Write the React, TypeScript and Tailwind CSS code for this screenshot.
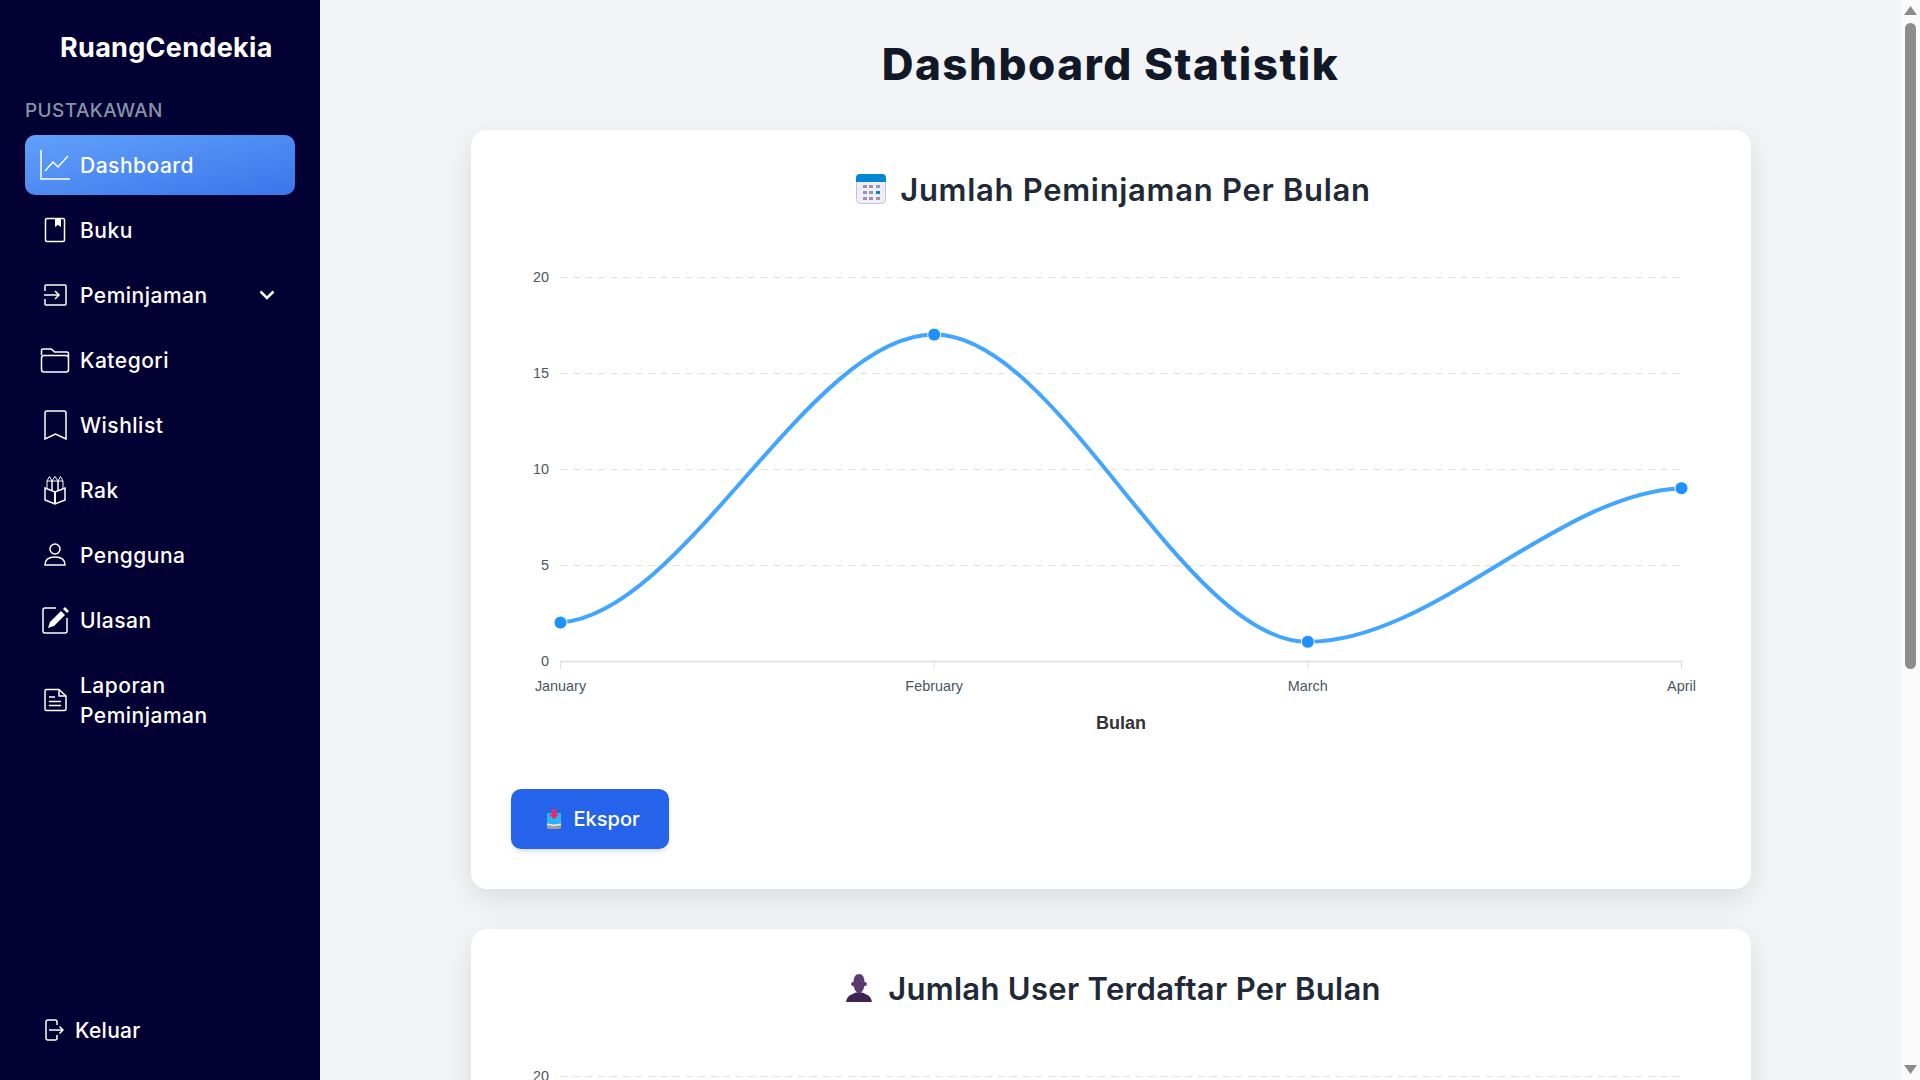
import React from 'react';

const sans = 'font-["Inter","Liberation_Sans",sans-serif]';

type Point = { x: number; y: number };

const PLOT = { left: 49.5, right: 1170.5, top: 39, bottom: 423 };
const MONTHS = ['January', 'February', 'March', 'April'];

// flat tangents on every point, a touch of slope on the two ends
const buildCurve = (pts: Point[]) => {
  const slope = (i: number) => {
    if (i === 0) return (0.1 * (pts[1].y - pts[0].y)) / (pts[1].x - pts[0].x);
    if (i === pts.length - 1) {
      const a = pts[i - 1];
      const b = pts[i];
      return (0.1 * (b.y - a.y)) / (b.x - a.x);
    }
    return 0;
  };
  let d = `M${pts[0].x} ${pts[0].y}`;
  for (let i = 1; i < pts.length; i++) {
    const a = pts[i - 1];
    const b = pts[i];
    const dx = (b.x - a.x) / 3;
    d += ` C${a.x + dx} ${a.y + slope(i - 1) * dx} ${b.x - dx} ${b.y - slope(i) * dx} ${b.x} ${b.y}`;
  }
  return d;
};

const LineChart = ({ data }: { data: number[] }) => {
  const h = PLOT.bottom - PLOT.top;
  const w = PLOT.right - PLOT.left;
  const pts = data.map((v, i) => ({
    x: PLOT.left + (w * i) / (data.length - 1),
    y: PLOT.bottom - (h * v) / 20,
  }));
  return (
    <svg width={1200} height={511} className="block" fontFamily="'Liberation Sans', Arial, sans-serif">
      {[20, 15, 10, 5].map((v) => {
        const y = PLOT.bottom - (h * v) / 20 + 0.5;
        return (
          <g key={v}>
            <line x1={PLOT.left} x2={PLOT.right} y1={y} y2={y} stroke="#e0e0e0" strokeWidth={1} strokeDasharray="7 5.5" />
            <text x={38} y={y + 4} textAnchor="end" fontSize={14.4} fill="#4b5563">{v}</text>
          </g>
        );
      })}
      <line x1={PLOT.left} x2={PLOT.right} y1={PLOT.bottom + 0.5} y2={PLOT.bottom + 0.5} stroke="#e4e4e4" strokeWidth={2} />
      <text x={38} y={PLOT.bottom + 4.5} textAnchor="end" fontSize={14.4} fill="#4b5563">0</text>
      {MONTHS.map((m, i) => {
        const x = PLOT.left + (w * i) / 3;
        return (
          <g key={m}>
            <line x1={x} x2={x} y1={PLOT.bottom} y2={PLOT.bottom + 8} stroke="#e0e0e0" strokeWidth={1} />
            <text x={x} y={PLOT.bottom + 30} textAnchor="middle" fontSize={14.4} fill="#4b5563">{m}</text>
          </g>
        );
      })}
      <text x={610} y={PLOT.bottom + 68} textAnchor="middle" fontSize={18} fontWeight={700} fill="#333333">Bulan</text>
      <path d={buildCurve(pts)} fill="none" stroke="#42a5ff" strokeWidth={4} />
      {pts.map((p, i) => (
        <circle key={i} cx={p.x} cy={p.y} r={6.5} fill="#1e90ff" stroke="#ffffff" strokeWidth={1} />
      ))}
    </svg>
  );
};

const Icon = ({ children, size = 30 }: { children: React.ReactNode; size?: number }) => (
  <svg width={size} height={size} viewBox={`0 0 ${size} ${size}`} fill="none" stroke="currentColor" strokeWidth={1.5} className="shrink-0">
    {children}
  </svg>
);

const icons: Record<string, React.ReactNode> = {
  dashboard: (
    <Icon>
      <path d="M1 0V29H30" />
      <path d="M5 21L13 12L18 17L28 6" />
    </Icon>
  ),
  buku: (
    <Icon>
      <rect x="5.5" y="3.5" width="19" height="23" rx="1.5" />
      <path d="M15 4H21V12L18 10L15 12Z" fill="currentColor" stroke="none" />
    </Icon>
  ),
  peminjaman: (
    <Icon>
      <path d="M5 11V6Q5 5 6 5H25Q26 5 26 6V24Q26 25 25 25H6Q5 25 5 24V19" />
      <path d="M4 15H19M15 11L19 15L15 19" />
    </Icon>
  ),
  kategori: (
    <Icon>
      <path d="M1.500 10V5.500Q1.500 4 3 4H10.500Q11.500 4 12.500 5L14.500 7H27Q28.500 7 28.500 9V12" />
      <rect x="1.500" y="10.500" width="27" height="16.500" rx="2.500" />
    </Icon>
  ),
  wishlist: (
    <Icon>
      <path d="M5 29V3Q5 1 7 1H24Q26 1 26 3V29L15.500 24Z" />
    </Icon>
  ),
  rak: (
    <Icon>
      <path d="M5 13L15 17L25 13V25L15 29L5 25Z" />
      <path d="M15 17V29" strokeWidth={2} />
      <path d="M7 14V6L9.500 1.500L12 6V15M12 15V6L15 1.500L18 6V15M18 15V6L20.500 1.500L23 6V14M7 6H23" strokeWidth={1} />
    </Icon>
  ),
  pengguna: (
    <Icon>
      <circle cx="15" cy="9" r="5" />
      <path d="M5 25Q5 17 15 17Q25 17 25 25Z" />
    </Icon>
  ),
  ulasan: (
    <Icon>
      <path d="M16 3H5Q3 3 3 5V26Q3 28 5 28H25Q27 28 27 26V13" />
      <path d="M8 23L10 17L21 6L25 10L14 21Z" fill="currentColor" stroke="none" />
      <path d="M23 4L25 2L29 6L27 8Z" fill="currentColor" stroke="none" />
    </Icon>
  ),
  laporan: (
    <Icon>
      <path d="M5 6Q5 4.500 6.500 4.500H19L26 11V24Q26 25.500 24.500 25.500H6.500Q5 25.500 5 24Z" />
      <path d="M19 5V11H25.500" />
      <path d="M9 12H15M9 16.500H21M9 20.500H21" />
    </Icon>
  ),
};

const menu = [
  { key: 'dashboard', label: 'Dashboard', active: true },
  { key: 'buku', label: 'Buku' },
  { key: 'peminjaman', label: 'Peminjaman', caret: true },
  { key: 'kategori', label: 'Kategori' },
  { key: 'wishlist', label: 'Wishlist' },
  { key: 'rak', label: 'Rak' },
  { key: 'pengguna', label: 'Pengguna' },
  { key: 'ulasan', label: 'Ulasan' },
  { key: 'laporan', label: 'Laporan Peminjaman' },
];

const Sidebar = () => (
  <aside className="w-[320px] h-full shrink-0 bg-[#030033] text-white flex flex-col px-[25px]">
    <div className="pl-[35px] pt-[29px] h-[93px] text-[27px] leading-[38px] font-bold tracking-[0.3px] whitespace-nowrap">RuangCendekia</div>
    <div className="h-[42px] text-[19px] leading-[35px] font-medium tracking-[0.4px] text-[#8594a8]">PUSTAKAWAN</div>
    <nav className="flex flex-col gap-[5px]">
      {menu.map((item) => (
        <div
          key={item.key}
          className={`flex items-center gap-[10px] pl-[15px] pr-[20px] py-[15px] rounded-[10px] text-[21px] leading-[30px] font-medium tracking-[0.5px] ${
            item.active ? 'bg-gradient-to-br from-[#62a0fb] to-[#3a76ea]' : ''
          }`}
        >
          {icons[item.key]}
          <span className="flex-1 translate-y-px">{item.label}</span>
          {item.caret && (
            <svg width="16" height="10" viewBox="0 0 16 10" fill="none" stroke="currentColor" strokeWidth="2.500" className="shrink-0">
              <path d="M1.500 1.500L8 8L14.500 1.500" />
            </svg>
          )}
        </div>
      ))}
    </nav>
    <div className="mt-auto mb-[35px] flex items-center gap-[11px] pl-[19px] text-[21px] leading-[30px] font-medium tracking-[0.3px]">
      <svg width="20" height="22" viewBox="0 0 20 22" fill="none" stroke="currentColor" strokeWidth="1.500" className="shrink-0">
        <path d="M13 6V3Q13 1 11 1H4Q2 1 2 3V19Q2 21 4 21H11Q13 21 13 19V16" />
        <path d="M5 11H19M15.500 7.500L19 11L15.500 14.500" />
      </svg>
      <span className="translate-y-px">Keluar</span>
    </div>
  </aside>
);

const CalendarIcon = () => (
  <svg width="30" height="30" viewBox="0 0 30 30" className="shrink-0">
    <rect x="0.500" y="0.500" width="29" height="29" rx="4" fill="#f1edf8" stroke="#c9bfd8" />
    <path d="M0 8V4Q0 0 4 0H26Q30 0 30 4V8Z" fill="#0288d1" />
    {[12, 18, 24].map((y) =>
      [7, 13, 20].map((x) => (
        <rect key={`${x}-${y}`} x={x} y={y - 1} width="4" height="3" fill={x === 20 && y === 18 ? '#0288d1' : '#9c94a8'} />
      )),
    )}
  </svg>
);

const PersonIcon = () => (
  <svg width="26" height="28" viewBox="0 0 28 28" preserveAspectRatio="none" className="shrink-0">
    <path d="M0 28Q1 22 6 20.500L10.500 18.500H17.500L22 20.500Q27 22 28 28Z" fill="#3e2350" />
    <path d="M8 9Q8 0 14 0Q20 0 20 9Q20 17 14 20Q8 17 8 9Z" fill="#5b3a70" />
    <rect x="5.500" y="8" width="17" height="4" rx="2" fill="#5b3a70" />
  </svg>
);

const ExportIcon = () => (
  <svg width="16" height="20" viewBox="0 0 18 20" preserveAspectRatio="none" className="shrink-0">
    <path d="M1 15H17V18Q17 20 15 20H3Q1 20 1 18Z" fill="#9e9e9e" />
    <path d="M1 5Q1 4 2 4H16Q17 4 17 5V14L9 16L1 14Z" fill="#29b6f6" />
    <path d="M1 15L9 16.500L17 15" stroke="#eeeeee" strokeWidth="1.500" fill="none" />
    <path d="M6.500 0H11.500V5H14.500L9 10.500L3.500 5H6.500Z" fill="#ec2a6b" />
  </svg>
);

type CardProps = {
  icon: React.ReactNode;
  title: string;
  data: number[];
  titleClass: string;
};

const Card = ({ icon, title, data, titleClass }: CardProps) => (
  <section className="w-[1280px] shrink-0 bg-white rounded-2xl p-10 shadow-[0_10px_30px_rgba(0,0,0,0.1)]">
    <h2 className={`flex items-center justify-center pl-[6px] h-[38px] text-[31px] leading-[38px] font-semibold text-[#1f2937] ${titleClass}`}>
      {icon}
      <span className="translate-y-px">{title}</span>
    </h2>
    <div className="mt-[30px]">
      <LineChart data={data} />
    </div>
    <button className="mt-10 w-[158px] h-[60px] flex items-center justify-start pl-[35px] gap-[12px] rounded-[10px] bg-[#2563eb] text-white text-[20px] font-medium shadow-md">
      <ExportIcon />
      Ekspor
    </button>
  </section>
);

const Scrollbar = () => (
  <div className="w-[19px] h-full shrink-0 bg-[#fafafa] flex flex-col items-center">
    <svg width="13" height="9" viewBox="0 0 13 9" className="mt-[6px] shrink-0" fill="#8c8c8c">
      <path d="M6.500 0L13 9H0Z" />
    </svg>
    <div className="mt-[8px] w-[11px] h-[646px] rounded-full bg-[#8c8c8c]" />
    <svg width="13" height="9" viewBox="0 0 13 9" className="mt-auto mb-[6px] shrink-0" fill="#8c8c8c">
      <path d="M6.500 9L13 0H0Z" />
    </svg>
  </div>
);

export default function App() {
  return (
    <div className={`flex h-screen w-full overflow-hidden bg-[#f3f4f6] ${sans}`}>
      <Sidebar />
      <main className="flex-1 min-w-0 h-full overflow-hidden flex flex-col items-center pt-[34px]">
        <h1 className="h-[60px] mb-[36px] text-[44px] leading-[60px] font-extrabold tracking-[1.5px] text-[#111827]">Dashboard Statistik</h1>
        <div className="flex flex-col gap-10">
          <Card icon={<CalendarIcon />} title="Jumlah Peminjaman Per Bulan" data={[2, 17, 1, 9]} titleClass="gap-[14px] tracking-[0.7px]" />
          <Card icon={<PersonIcon />} title="Jumlah User Terdaftar Per Bulan" data={[4, 11, 6, 13]} titleClass="gap-[16px] tracking-[0.3px]" />
        </div>
      </main>
      <Scrollbar />
    </div>
  );
}
